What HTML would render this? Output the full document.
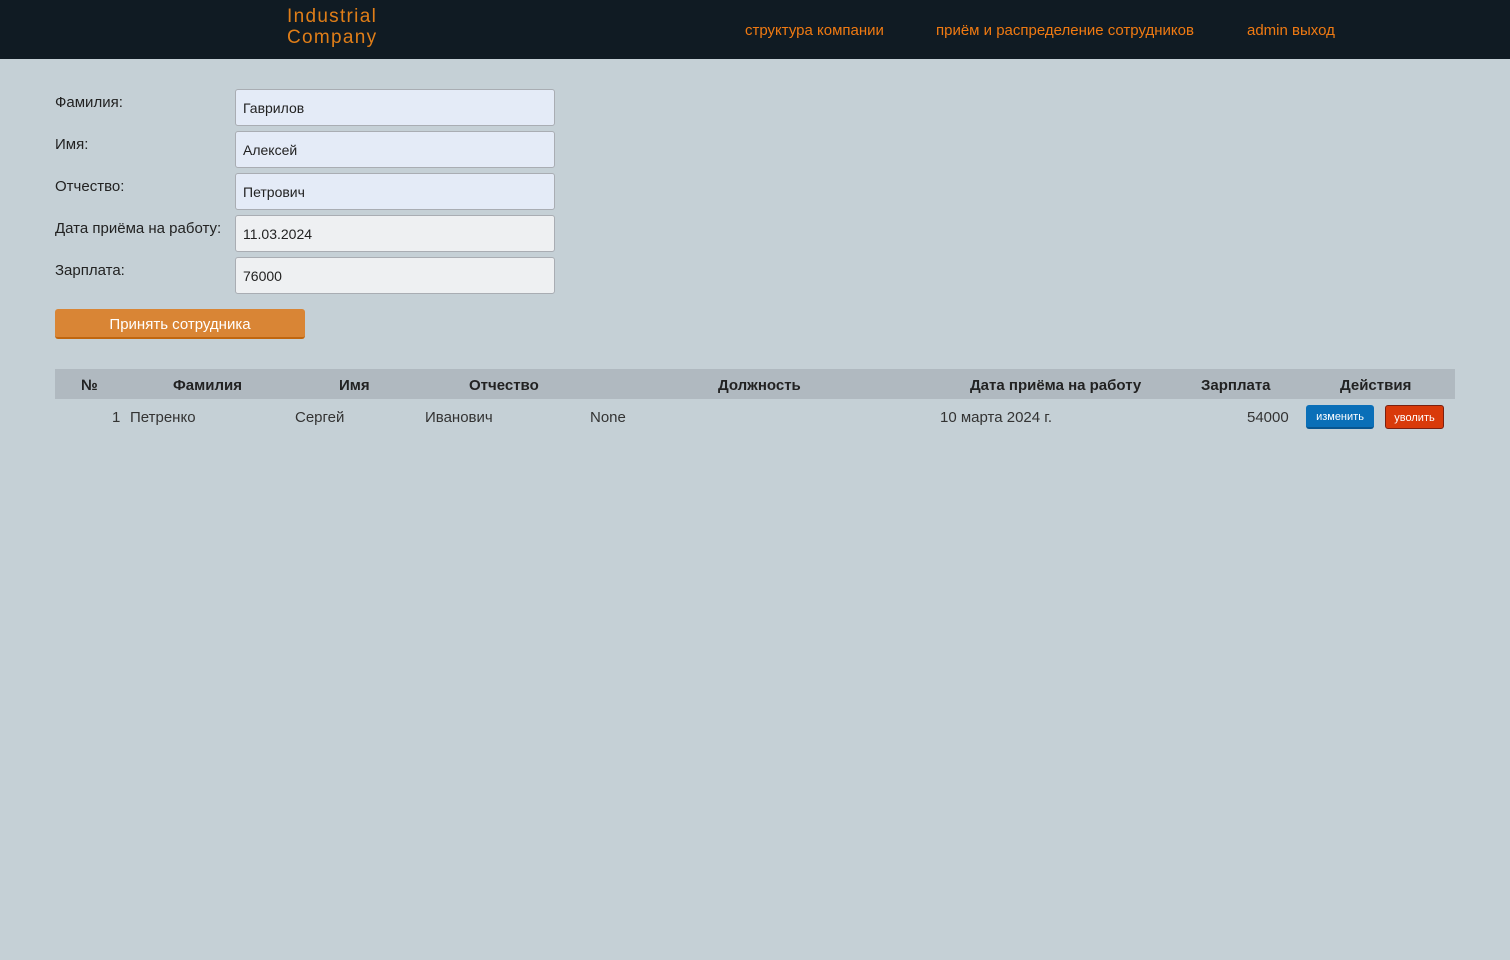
<!DOCTYPE html>
<html><head><meta charset="utf-8"><style>
*{margin:0;padding:0;box-sizing:border-box}
body{width:1510px;height:960px;background:#c5d0d6;font-family:"Liberation Sans","DejaVu Sans",sans-serif;color:#222;position:relative;overflow:hidden}
.hdr{position:absolute;left:0;top:0;width:1510px;height:59px;background:#101b23}
.logo{position:absolute;left:287px;top:6px;color:#e07e18;font-family:"Liberation Sans",sans-serif;font-size:19px;line-height:21px;letter-spacing:1.3px}
.nav{position:absolute;top:22px;color:#f07a12;font-size:15px}
.lbl{position:absolute;left:55px;font-size:15px;color:#222}
.inp{position:absolute;left:235px;width:320px;height:37px;border:1px solid #a9adb3;border-radius:3px;background:#e4ebf7;font-size:14px;padding:10px 7px 0;color:#222}
.inp.g{background:#eef0f2}
.btn{position:absolute;left:55px;top:309px;width:250px;height:30px;background:#d98535;border-bottom:2px solid #c0660f;border-radius:3px;color:#fff;font-size:15px;text-align:center;line-height:31px}
.th{position:absolute;top:369px;left:55px;width:1400px;height:30px;background:#b0b9c0}
.t{position:absolute;font-size:15px;white-space:nowrap}
.b{font-weight:bold;top:377px}
.r{top:409px;color:#333}
.sb{position:absolute;top:405px;height:24px;border-radius:3px;color:#fff;font-size:11px;text-align:center;line-height:25px}
</style></head><body>
<div class="hdr">
<div class="logo">Industrial<br>Company</div>
<div class="nav" style="left:745px">структура компании</div>
<div class="nav" style="left:936px">приём и распределение сотрудников</div>
<div class="nav" style="left:1247px">admin выход</div>
</div>
<div class="lbl" style="top:94px">Фамилия:</div>
<div class="inp" style="top:89px">Гаврилов</div>
<div class="lbl" style="top:136px">Имя:</div>
<div class="inp" style="top:131px">Алексей</div>
<div class="lbl" style="top:178px">Отчество:</div>
<div class="inp" style="top:173px">Петрович</div>
<div class="lbl" style="top:220px">Дата приёма на работу:</div>
<div class="inp g" style="top:215px">11.03.2024</div>
<div class="lbl" style="top:262px">Зарплата:</div>
<div class="inp g" style="top:257px">76000</div>
<div class="btn">Принять сотрудника</div>
<div class="th"></div>
<div class="t b" style="left:81px">№</div>
<div class="t b" style="left:173px">Фамилия</div>
<div class="t b" style="left:339px">Имя</div>
<div class="t b" style="left:469px">Отчество</div>
<div class="t b" style="left:718px">Должность</div>
<div class="t b" style="left:970px">Дата приёма на работу</div>
<div class="t b" style="left:1201px">Зарплата</div>
<div class="t b" style="left:1340px">Действия</div>
<div class="t r" style="left:112px">1</div>
<div class="t r" style="left:130px">Петренко</div>
<div class="t r" style="left:295px">Сергей</div>
<div class="t r" style="left:425px">Иванович</div>
<div class="t r" style="left:590px">None</div>
<div class="t r" style="left:940px">10 марта 2024 г.</div>
<div class="t r" style="left:1247px">54000</div>
<div class="sb" style="left:1306px;width:68px;background:#0a6fb8;border-bottom:2px solid #085590">изменить</div>
<div class="sb" style="left:1385px;width:59px;background:#d93a0a;border:1px solid #7a2010">уволить</div>
</body></html>
